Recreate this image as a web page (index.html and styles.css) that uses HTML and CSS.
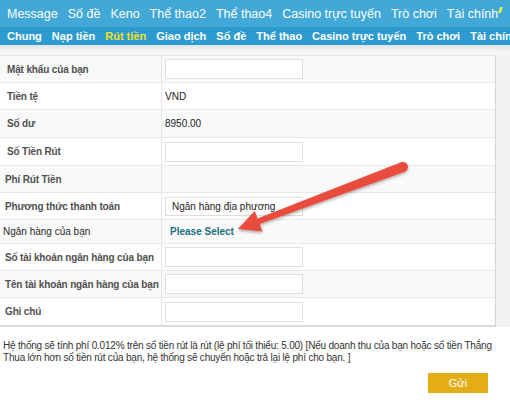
FILE: index.html
```html
<!DOCTYPE html>
<html>
<head>
<meta charset="utf-8">
<link rel="stylesheet" href="styles.css">
</head>
<body>
<div class="page">
  <nav class="nav1">
    <span>Message</span><span>Số đề</span><span>Keno</span><span>Thể thao2</span><span>Thể thao4</span><span>Casino trực tuyến</span><span>Trò chơi</span><span>Tài chính</span><span class="mark"></span>
  </nav>
  <nav class="nav2">
    <span>Chung</span><span>Nạp tiền</span><span class="active">Rút tiền</span><span>Giao dịch</span><span>Số đề</span><span>Thể thao</span><span>Casino trực tuyến</span><span>Trò chơi</span><span>Tài chính</span>
  </nav>
  <div class="main">
    <div class="form">
      <div class="row"><div class="lbl wide">Mật khẩu của bạn</div><div class="val"><div class="inp"></div></div></div>
      <div class="row alt"><div class="lbl wide">Tiền tệ</div><div class="val">VND</div></div>
      <div class="row r28"><div class="lbl wide">Số dư</div><div class="val">8950.00</div></div>
      <div class="row alt r28"><div class="lbl wide">Số Tiền Rút</div><div class="val"><div class="inp"></div></div></div>
      <div class="row"><div class="lbl">Phí Rút Tiền</div><div class="val"></div></div>
      <div class="row alt"><div class="lbl">Phương thức thanh toán</div><div class="val"><div class="inp sel">Ngân hàng địa phương</div></div></div>
      <div class="row short"><div class="lbl plain">Ngân hàng của bạn</div><div class="val"><span class="pick">Please Select</span></div></div>
      <div class="row alt"><div class="lbl">Số tài khoản ngân hàng của bạn</div><div class="val"><div class="inp"></div></div></div>
      <div class="row"><div class="lbl">Tên tài khoản ngân hàng của bạn</div><div class="val"><div class="inp"></div></div></div>
      <div class="row alt last"><div class="lbl">Ghi chú</div><div class="val"><div class="inp"></div></div></div>
    </div>
    <div class="side"></div>
  </div>
  <p class="note">Hệ thống sẽ tính phí 0.012% trên số tiền rút là rút (lệ phí tối thiểu: 5.00) [Nếu doanh thu của bạn hoặc số tiền Thắng Thua lớn hơn số tiền rút của bạn, hệ thống sẽ chuyển hoặc trả lại lệ phí cho bạn. ]</p>
  <div class="actions"><button class="btn">Gửi</button></div>
  <svg class="arrow" width="510" height="400" viewBox="0 0 510 400">
    <defs>
      <filter id="sh" x="-10%" y="-20%" width="120%" height="150%">
        <feDropShadow dx="0" dy="1.5" stdDeviation="1.4" flood-color="#000" flood-opacity="0.35"/>
      </filter>
    </defs>
    <path filter="url(#sh)" fill="#e94c3d" d="M238 229 L254.7 211 L257.5 218.5 L401.2 162.3 A5 5 0 0 1 404.8 171.7 L259.7 224.1 L262.5 231.6 Z"/>
  </svg>
</div>
</body>
</html>
```
FILE: styles.css
```css
* { box-sizing: border-box; }
html, body { margin: 0; padding: 0; }
body {
  width: 510px;
  height: 400px;
  overflow: hidden;
  background: #ffffff;
  font-family: "Liberation Sans", Arial, Helvetica, sans-serif;
  color: #333;
}
.page { position: relative; width: 510px; height: 400px; }
.nav1 {
  height: 27px;
  background: #41a8d8;
  display: flex;
  align-items: center;
  gap: 10px;
  padding-left: 7px;
  white-space: nowrap;
  overflow: hidden;
  color: #fff;
  font-size: 12.5px;
}
.nav1 .mark {
  flex: none;
  width: 3px;
  height: 6px;
  margin: -8px 0 0 -9px;
  background: #d8ef4c;
  border-radius: 1px;
  transform: skewX(-20deg);
}
.nav2 {
  height: 18px;
  background: #2d9bd0;
  display: flex;
  align-items: center;
  gap: 10px;
  padding-left: 7px;
  white-space: nowrap;
  overflow: hidden;
  color: #fff;
  font-size: 11px;
  font-weight: bold;
}
.nav2 .active { color: #f3e01c; }
.main {
  display: flex;
  padding-top: 10px;
  background: linear-gradient(#dfe6eb, #eef1f3 5px, #f7f8f8 10px);
}
.form {
  width: 496px;
  background: #fff;
  border-right: 1px solid #d4d4d4;
  border-bottom: 2px solid #dadada;
  border-top: 1px solid #e6e6e6;
}
.side { flex: 1; background: #f2f2f2; }
.row {
  display: flex;
  height: 27px;
  border-bottom: 1px solid #e8e8e8;
  background: #f9f9f9;
}
.row.alt { background: #ffffff; }
.row.r28 { height: 28px; }
.row.short { height: 24px; }
.row.last { border-bottom: none; }
.lbl {
  width: 162px;
  border-right: 1px solid #e6e6e6;
  display: flex;
  align-items: center;
  padding-left: 5px;
  font-size: 10px;
  font-weight: bold;
  letter-spacing: -0.15px;
  color: #505050;
  white-space: nowrap;
}
.lbl.wide { padding-left: 7px; }
.lbl.plain { font-weight: normal; color: #2a2a2a; padding-left: 3px; letter-spacing: 0; }
.val {
  flex: 1;
  display: flex;
  align-items: center;
  padding-left: 3px;
  font-size: 10px;
  color: #222;
}
.inp {
  width: 138px;
  height: 20px;
  border: 1px solid #dedede;
  background: #fff;
}
.inp.sel {
  height: 19px;
  font-size: 10px;
  color: #222;
  padding-left: 6px;
  display: flex;
  align-items: center;
  white-space: nowrap;
}
.pick {
  padding-left: 5px;
  font-weight: bold;
  color: #1d6f80;
  font-size: 10px;
}
.note {
  margin: 0;
  padding: 13px 3px 0 3px;
  font-size: 10px;
  letter-spacing: -0.2px;
  line-height: 12px;
  color: #333;
}
.actions {
  display: flex;
  justify-content: flex-end;
  padding: 9px 22px 0 0;
}
.btn {
  width: 60px;
  height: 20px;
  border: none;
  background: #e3ad17;
  color: #fff;
  font-family: "Liberation Sans", Arial, sans-serif;
  font-size: 11px;
  padding: 0;
}
.arrow { position: absolute; left: 0; top: 0; pointer-events: none; }
```
